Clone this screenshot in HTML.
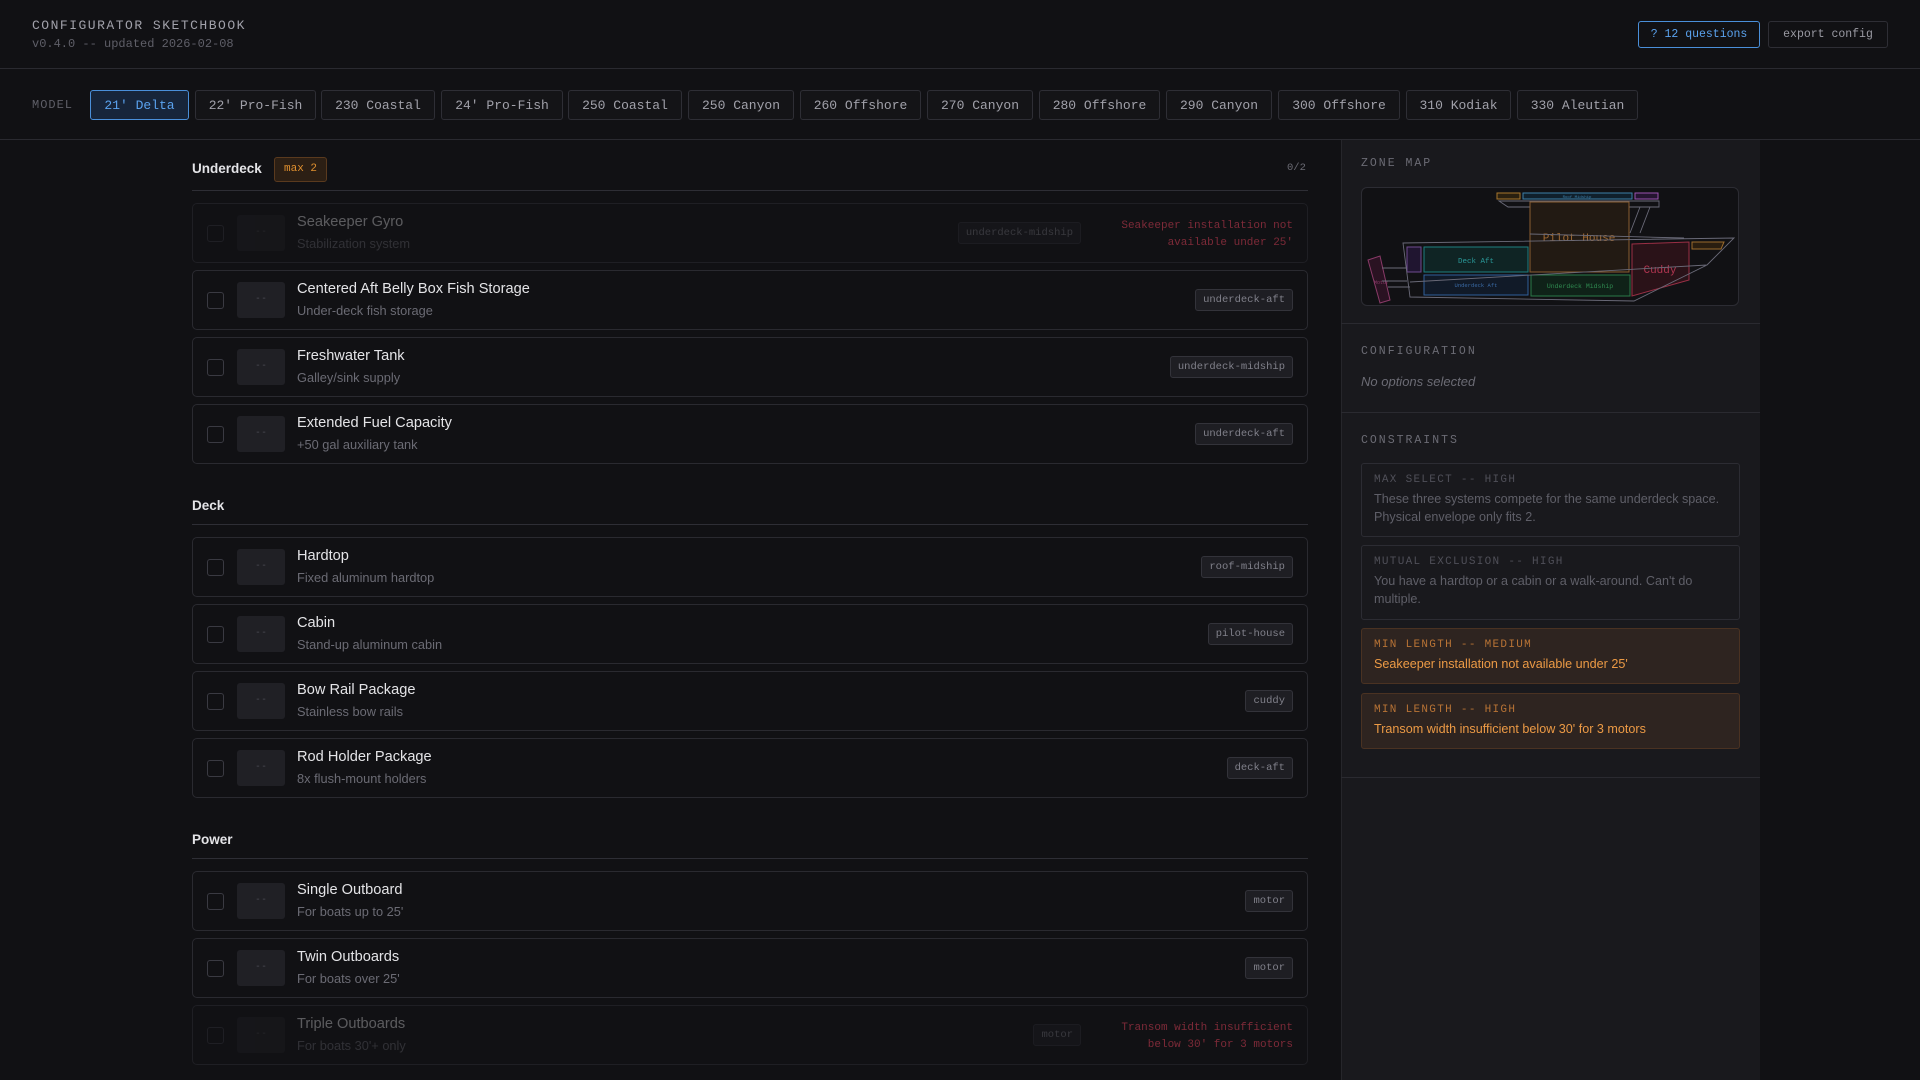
<!DOCTYPE html>
<html><head><meta charset="utf-8"><style>
*{box-sizing:border-box;margin:0;padding:0}
body{width:1920px;height:1080px;background:#111114;color:#e4e4e7;font-family:"Liberation Sans",sans-serif;position:relative;overflow:hidden}
.mono{font-family:"Liberation Mono",monospace}
.abs{position:absolute}
.hdr{left:0;top:0;width:1920px;height:69px;border-bottom:1px solid #2a2a30}
.title{left:32px;top:18px;font-size:13px;letter-spacing:1.5px;color:#a1a1aa}
.sub{left:32px;top:37px;font-size:12px;color:#5f5f68}
.hbtn{top:21px;height:27px;border:1px solid #2e2e35;border-radius:3px;font-size:11.5px;color:#9a9aa3;display:flex;align-items:center;justify-content:center}
.mbar{left:0;top:69px;width:1920px;height:71px;border-bottom:1px solid #2a2a30}
.mlabel{left:32px;top:98px;font-size:12px;letter-spacing:1px;color:#5f5f68}
.mb{top:90px;height:30px;border:1px solid #2e2e35;border-radius:3px;font-size:13px;color:#a1a1aa;display:flex;align-items:center;justify-content:center;background:#141417}
.mb.on{border-color:#4a8fd9;background:#17253a;color:#5aa2ee}
.side{left:1341px;top:140px;width:419px;height:940px;background:#19191d;border-left:1px solid #26262b}
.sec{font-weight:bold;font-size:13.5px;color:#e4e4e7;left:192px}
.line{left:192px;width:1116px;height:1px;background:#2e2e35}
.item{left:192px;width:1116px;height:60px;border:1px solid #2a2a30;border-radius:5px}
.cb{position:absolute;left:14px;top:21px;width:17px;height:17px;border:1px solid #3a3a42;border-radius:3px}
.th{position:absolute;left:44px;top:11px;width:48px;height:36px;background:#202025;border-radius:3px;color:#4a4a52;font-size:10px;text-align:center;line-height:34px}
.it{position:absolute;left:104px;top:10px;font-size:14.6px;color:#e4e4e7}
.id{position:absolute;left:104px;top:32px;font-size:12.8px;color:#6b6b74}
.tag{position:absolute;right:14px;top:18px;height:22px;padding:0 7px;border:1px solid #33333a;background:#1e1e23;border-radius:3px;font-size:10.5px;color:#80808a;line-height:20px}
.dis .cb,.dis .th,.dis .it,.dis .id,.dis .tag{opacity:.35}
.err{position:absolute;right:14px;top:14px;text-align:right;font-size:11px;line-height:17px;color:#7d2a38}
.slab{left:1361px;font-size:11.5px;letter-spacing:2px;color:#6b6b74}
.sdiv{left:1341px;width:419px;height:1px;background:#2a2a30}
.cbox{left:1361px;width:379px;border:1px solid #2c2c33;border-radius:3px;padding:10px 12px}
.ch{font-size:11px;letter-spacing:1.3px;color:#4f4f58}
.ct{font-size:12.6px;color:#5f5f68;line-height:18px;margin-top:4px}
.warn{background:#2e2420;border-color:#4a3222}
.warn .ch{color:#b87335}.warn .ct{color:#ec9a45}
</style></head><body>
<div class="abs hdr"></div>
<div class="abs title mono">CONFIGURATOR SKETCHBOOK</div>
<div class="abs sub mono">v0.4.0 -- updated 2026-02-08</div>
<div class="abs hbtn mono" style="left:1638px;width:122px;border-color:#4a8fd9;color:#5aa2ee">? 12 questions</div>
<div class="abs hbtn mono" style="left:1768px;width:120px">export config</div>

<div class="abs mbar"></div>
<div class="abs mlabel mono">MODEL</div>
<div class="abs mb mono on" style="left:90px;width:99px">21' Delta</div>
<div class="abs mb mono" style="left:195px;width:121px">22' Pro-Fish</div>
<div class="abs mb mono" style="left:321px;width:114px">230 Coastal</div>
<div class="abs mb mono" style="left:441px;width:122px">24' Pro-Fish</div>
<div class="abs mb mono" style="left:568px;width:114px">250 Coastal</div>
<div class="abs mb mono" style="left:688px;width:106px">250 Canyon</div>
<div class="abs mb mono" style="left:800px;width:121px">260 Offshore</div>
<div class="abs mb mono" style="left:927px;width:106px">270 Canyon</div>
<div class="abs mb mono" style="left:1039px;width:121px">280 Offshore</div>
<div class="abs mb mono" style="left:1166px;width:106px">290 Canyon</div>
<div class="abs mb mono" style="left:1278px;width:122px">300 Offshore</div>
<div class="abs mb mono" style="left:1406px;width:105px">310 Kodiak</div>
<div class="abs mb mono" style="left:1517px;width:121px">330 Aleutian</div>

<div class="abs sec" style="top:161px">Underdeck</div>
<div class="abs mono" style="left:274px;top:157px;height:25px;padding:0 9px;border:1px solid #5a3a1e;background:#2c1f14;border-radius:3px;font-size:11px;color:#e0902f;line-height:23px">max 2</div>
<div class="abs mono" style="left:1287px;top:162px;font-size:10.5px;color:#6b6b74">0/2</div>
<div class="abs line" style="top:190px"></div>
<div class="abs item dis" style="top:203px;border-color:#1f1f24"><div class="cb"></div><div class="th">- -</div><div class="it">Seakeeper Gyro</div><div class="id">Stabilization system</div><div class="tag mono" style="right:226px">underdeck-midship</div><div class="err mono">Seakeeper installation not<br>available under 25'</div></div>
<div class="abs item" style="top:270px"><div class="cb"></div><div class="th">- -</div><div class="it">Centered Aft Belly Box Fish Storage</div><div class="id">Under-deck fish storage</div><div class="tag mono">underdeck-aft</div></div>
<div class="abs item" style="top:337px"><div class="cb"></div><div class="th">- -</div><div class="it">Freshwater Tank</div><div class="id">Galley/sink supply</div><div class="tag mono">underdeck-midship</div></div>
<div class="abs item" style="top:404px"><div class="cb"></div><div class="th">- -</div><div class="it">Extended Fuel Capacity</div><div class="id">+50 gal auxiliary tank</div><div class="tag mono">underdeck-aft</div></div>

<div class="abs sec" style="top:498px">Deck</div>
<div class="abs line" style="top:524px"></div>
<div class="abs item" style="top:537px"><div class="cb"></div><div class="th">- -</div><div class="it">Hardtop</div><div class="id">Fixed aluminum hardtop</div><div class="tag mono">roof-midship</div></div>
<div class="abs item" style="top:604px"><div class="cb"></div><div class="th">- -</div><div class="it">Cabin</div><div class="id">Stand-up aluminum cabin</div><div class="tag mono">pilot-house</div></div>
<div class="abs item" style="top:671px"><div class="cb"></div><div class="th">- -</div><div class="it">Bow Rail Package</div><div class="id">Stainless bow rails</div><div class="tag mono">cuddy</div></div>
<div class="abs item" style="top:738px"><div class="cb"></div><div class="th">- -</div><div class="it">Rod Holder Package</div><div class="id">8x flush-mount holders</div><div class="tag mono">deck-aft</div></div>

<div class="abs sec" style="top:832px">Power</div>
<div class="abs line" style="top:858px"></div>
<div class="abs item" style="top:871px"><div class="cb"></div><div class="th">- -</div><div class="it">Single Outboard</div><div class="id">For boats up to 25'</div><div class="tag mono">motor</div></div>
<div class="abs item" style="top:938px"><div class="cb"></div><div class="th">- -</div><div class="it">Twin Outboards</div><div class="id">For boats over 25'</div><div class="tag mono">motor</div></div>
<div class="abs item dis" style="top:1005px;border-color:#1f1f24"><div class="cb"></div><div class="th">- -</div><div class="it">Triple Outboards</div><div class="id">For boats 30'+ only</div><div class="tag mono" style="right:226px">motor</div><div class="err mono">Transom width insufficient<br>below 30' for 3 motors</div></div>

<div class="abs side"></div>
<div class="abs slab mono" style="top:157px">ZONE MAP</div>
<div class="abs" style="left:1361px;top:187px;width:378px;height:119px;background:#111114;border:1px solid #2c2c33;border-radius:6px;overflow:hidden">
<svg width="378" height="119" viewBox="0 0 378 119" font-family="Liberation Mono,monospace">
<rect x="135" y="5" width="23" height="6" fill="#2a2010" stroke="#a8762c" stroke-width="1"/>
<rect x="161" y="5" width="109" height="6" fill="#10202c" stroke="#3d7fa8" stroke-width="1"/>
<text x="215" y="10" font-size="4" fill="#3d7fa8" text-anchor="middle">Roof Midship</text>
<rect x="273" y="5" width="23" height="6" fill="#251530" stroke="#9a52b0" stroke-width="1"/>
<path d="M137 13 L297 13 L297 19 L146 19 Z" fill="none" stroke="#6a6a78" stroke-width="0.9"/>
<rect x="168" y="14" width="99" height="70" fill="#221a13" stroke="#8a5d30" stroke-width="1"/>
<text x="217" y="53" font-size="11" fill="#a06a33" text-anchor="middle">Pilot House</text>
<path d="M278 19 L268 45 M288 19 L278 45 M168 46 L322 50" stroke="#6a6a78" stroke-width="0.9" fill="none"/>
<rect x="62" y="59" width="104" height="25" fill="#0f2424" stroke="#1e7f7f" stroke-width="1"/>
<text x="114" y="75" font-size="7.5" fill="#2a9a9a" text-anchor="middle">Deck Aft</text>
<rect x="62" y="87" width="104" height="20" fill="#111a28" stroke="#2f5f9a" stroke-width="1"/>
<text x="114" y="99" font-size="5.5" fill="#3a6aa5" text-anchor="middle">Underdeck Aft</text>
<rect x="169" y="87" width="99" height="21" fill="#0f2218" stroke="#2a7a48" stroke-width="1"/>
<text x="218" y="100" font-size="6.5" fill="#2f8a50" text-anchor="middle">Underdeck Midship</text>
<path d="M270 56 L327 54 L327 92 L270 108 Z" fill="#2a1218" stroke="#9a2f45" stroke-width="1"/>
<text x="298" y="85" font-size="11" fill="#b03550" text-anchor="middle">Cuddy</text>
<path d="M330 54 L362 54 L359 61 L330 61 Z" fill="#2a1e10" stroke="#9a6a2c" stroke-width="1"/>
<rect x="45" y="59" width="14" height="25" fill="#201530" stroke="#6e4a90" stroke-width="1"/>
<path d="M6 72 L18 68 L28 112 L18 115 Z" fill="#2a1222" stroke="#8a3a68" stroke-width="1"/>
<text x="12" y="96" font-size="5" fill="#8a3a68">Motor</text>
<path d="M41 55 L372 50 L345 77 L272 113 L48 109 Z M48 94 L345 77 M20 80 L45 80 M26 99 L48 99 M20 93 L45 93" fill="none" stroke="#6a6a78" stroke-width="0.9"/>
</svg></div>
<div class="abs sdiv" style="top:323px"></div>
<div class="abs slab mono" style="top:345px">CONFIGURATION</div>
<div class="abs" style="left:1361px;top:374px;font-size:13px;font-style:italic;color:#6b6b74">No options selected</div>
<div class="abs sdiv" style="top:412px"></div>
<div class="abs slab mono" style="top:434px">CONSTRAINTS</div>
<div class="abs cbox" style="top:463px;height:74px"><div class="ch mono">MAX SELECT -- HIGH</div><div class="ct">These three systems compete for the same underdeck space. Physical envelope only fits 2.</div></div>
<div class="abs cbox" style="top:545px;height:75px"><div class="ch mono">MUTUAL EXCLUSION -- HIGH</div><div class="ct">You have a hardtop or a cabin or a walk-around. Can't do multiple.</div></div>
<div class="abs cbox warn" style="top:628px;height:56px"><div class="ch mono">MIN LENGTH -- MEDIUM</div><div class="ct">Seakeeper installation not available under 25'</div></div>
<div class="abs cbox warn" style="top:693px;height:56px"><div class="ch mono">MIN LENGTH -- HIGH</div><div class="ct">Transom width insufficient below 30' for 3 motors</div></div>
<div class="abs sdiv" style="top:777px"></div>
</body></html>
